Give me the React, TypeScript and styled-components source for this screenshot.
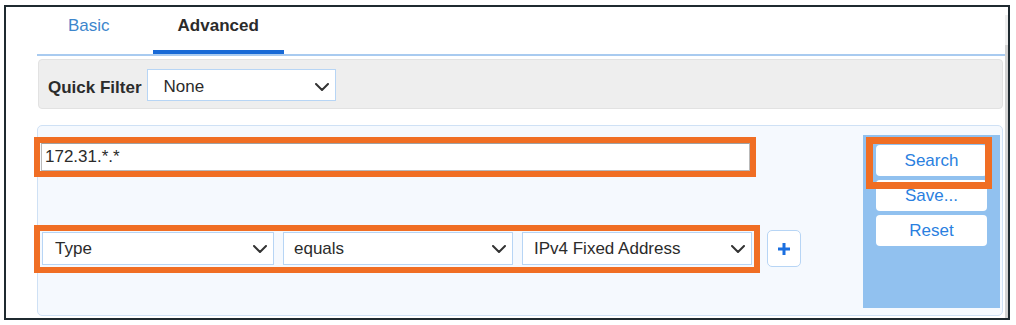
import React from 'react';
import styled, { createGlobalStyle } from 'styled-components';

const GlobalStyle = createGlobalStyle`
  html, body {
    margin: 0;
    padding: 0;
    background: #ffffff;
  }
  body {
    font-family: "Liberation Sans", Arial, sans-serif;
    font-size: 17px;
    color: #2b2b2b;
  }
`;

const Frame = styled.div`
  box-sizing: border-box;
  margin: 5px 0 0 4px;
  width: 1006px;
  height: 315px;
  border: 2px solid #1f2a30;
  display: flex;
  background: #ffffff;
`;

const Content = styled.div`
  flex: 1;
  display: flex;
  flex-direction: column;
  margin-left: 31px;
`;

const Scrollbar = styled.div`
  flex: none;
  width: 3px;
  margin-top: 8px;
  background: linear-gradient(#eeeeee 0, #eeeeee 30px, #d2d2d2 30px, #d2d2d2 100%);
`;

const TabList = styled.div`
  display: flex;
  gap: 19px;
  padding-left: 7px;
  border-bottom: 2px solid #a9cbf0;
`;

const Tab = styled.div<{ $active?: boolean }>`
  line-height: 37px;
  padding: 0 ${p => (p.$active ? '25px' : '24px')} 6px;
  border-bottom: 4px solid ${p => (p.$active ? '#1769d6' : 'transparent')};
  color: ${p => (p.$active ? '#2b2b2b' : '#3d86cc')};
  font-weight: ${p => (p.$active ? 700 : 400)};
`;

const QuickBar = styled.div`
  box-sizing: border-box;
  height: 50px;
  margin: 3px 2px 0 1px;
  padding: 2px 9px 0;
  display: flex;
  align-items: center;
  gap: 5px;
  background: #eeeeee;
  border: 1px solid #e2e2e2;
  border-radius: 4px;
`;

const Label = styled.span`
  padding-top: 6px;
  font-weight: 700;
  color: #2b2b2b;
`;

const SelectBox = styled.div<{ $width: number; $height: number; $pad: number; $drop?: number }>`
  box-sizing: border-box;
  width: ${p => p.$width}px;
  height: ${p => p.$height}px;
  padding: ${p => p.$drop ?? 0}px 6px 0 ${p => p.$pad}px;
  display: flex;
  align-items: center;
  justify-content: space-between;
  background: #ffffff;
  border: 1px solid #b7d5f5;
  color: #2b2b2b;
  flex: none;
`;

const Panel = styled.div`
  box-sizing: border-box;
  height: 191px;
  margin: 16px 2px 0 0;
  padding: 9px 2px 7px 0;
  display: flex;
  background: #f5f9fe;
  border: 1px solid #cfe1f5;
  border-radius: 5px;
`;

const Criteria = styled.div`
  flex: 1;
  display: flex;
  flex-direction: column;
  align-items: flex-start;
  padding: 8px 0 0 3px;
`;

const Highlight = styled.div<{ $inset: string; $size?: number }>`
  position: relative;
  display: flex;

  &::after {
    content: '';
    position: absolute;
    inset: ${p => p.$inset};
    border: ${p => p.$size ?? 6}px solid #f06e24;
    pointer-events: none;
    z-index: 2;
  }
`;

const TextInput = styled.div`
  box-sizing: border-box;
  width: 709px;
  height: 28px;
  padding: 0 3px;
  display: flex;
  align-items: center;
  background: #ffffff;
  border: 1px solid #b9b9b9;
  border-top-color: #a0a0a0;
  color: #2b2b2b;
`;

const FilterRow = styled.div`
  display: flex;
  align-items: center;
  margin: 59px 0 0 1px;
`;

const SelectGroup = styled.div`
  display: flex;
  gap: 9px;
`;

const PlusButton = styled.div`
  box-sizing: border-box;
  width: 34px;
  height: 37px;
  margin-left: 15px;
  display: flex;
  align-items: center;
  justify-content: center;
  background: #ffffff;
  border: 1px solid #b7d5f5;
  border-radius: 5px;
`;

const ActionColumn = styled.div`
  flex: none;
  box-sizing: border-box;
  width: 137px;
  padding: 10px 13px;
  display: flex;
  flex-direction: column;
  gap: 4px;
  background: #91c1ef;
`;

const ActionButton = styled.div<{ $grow?: boolean }>`
  box-sizing: border-box;
  height: 31px;
  flex: ${p => (p.$grow ? 1 : 'none')};
  display: flex;
  align-items: center;
  justify-content: center;
  background: #ffffff;
  border-radius: 4px;
  color: #2a7fe0;
`;

function Chevron() {
  return (
    <svg width="14" height="8" viewBox="0 0 14 8" fill="none">
      <path d="M1 1l6 6 6-6" stroke="#333333" strokeWidth="2" strokeLinecap="round" strokeLinejoin="round" />
    </svg>
  );
}

function Select({ value, width, height = 33, pad = 12, drop }: { value: string; width: number; height?: number; pad?: number; drop?: number }) {
  return (
    <SelectBox $width={width} $height={height} $pad={pad} $drop={drop}>
      <span>{value}</span>
      <Chevron />
    </SelectBox>
  );
}

export default function App() {
  return (
    <>
      <GlobalStyle />
      <Frame>
        <Content>
          <TabList>
            <Tab>Basic</Tab>
            <Tab $active>Advanced</Tab>
          </TabList>

          <QuickBar>
            <Label>Quick Filter</Label>
            <Select value="None" width={189} height={32} pad={16} drop={4} />
          </QuickBar>

          <Panel>
            <Criteria>
              <Highlight $inset="-6px -6px -6px -7px">
                <TextInput>172.31.*.*</TextInput>
              </Highlight>
              <FilterRow>
                <Highlight $inset="-7px -8px -8px -8px">
                  <SelectGroup>
                    <Select value="Type" width={232} />
                    <Select value="equals" width={230} pad={10} />
                    <Select value="IPv4 Fixed Address" width={230} pad={11} />
                  </SelectGroup>
                </Highlight>
                <PlusButton>
                  <svg width="14" height="14" viewBox="0 0 14 14">
                    <path d="M7 1v12M1 7h12" stroke="#1a6fe0" strokeWidth="3" />
                  </svg>
                </PlusButton>
              </FilterRow>
            </Criteria>

            <ActionColumn>
              <Highlight $inset="-8px -5px -13px -10px" $size={7}>
                <ActionButton $grow>Search</ActionButton>
              </Highlight>
              <ActionButton>Save...</ActionButton>
              <ActionButton>Reset</ActionButton>
            </ActionColumn>
          </Panel>
        </Content>
        <Scrollbar />
      </Frame>
    </>
  );
}
